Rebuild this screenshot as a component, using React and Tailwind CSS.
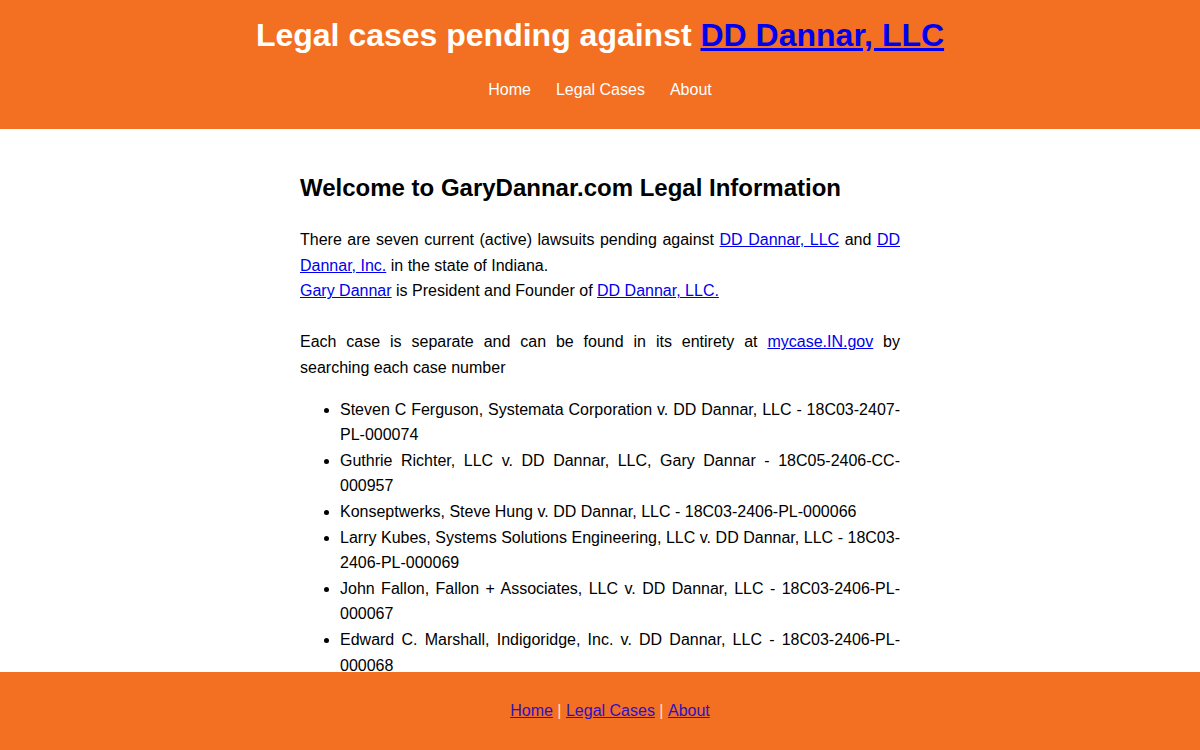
import React from 'react';

const cases = [
  'Steven C Ferguson, Systemata Corporation v. DD Dannar, LLC - 18C03-2407-PL-000074',
  'Guthrie Richter, LLC v. DD Dannar, LLC, Gary Dannar - 18C05-2406-CC-000957',
  'Konseptwerks, Steve Hung v. DD Dannar, LLC - 18C03-2406-PL-000066',
  'Larry Kubes, Systems Solutions Engineering, LLC v. DD Dannar, LLC - 18C03-2406-PL-000069',
  'John Fallon, Fallon + Associates, LLC v. DD Dannar, LLC - 18C03-2406-PL-000067',
  'Edward C. Marshall, Indigoridge, Inc. v. DD Dannar, LLC - 18C03-2406-PL-000068',
  'Jim Smith, Example Holdings, LLC v. DD Dannar, LLC - 18C03-2406-PL-000070',
];

function App() {
  return (
    <div className="min-h-screen bg-white text-black font-['Liberation_Sans',Arial,sans-serif]">
      <header className="bg-[#f36f21] text-white text-center pt-[17px] pb-[30px]">
        <h1 className="text-[32px] leading-[37px] font-bold">
          Legal cases pending against{' '}
          <a href="#" className="text-[#0000ee] underline">DD Dannar, LLC</a>
        </h1>
        <nav className="mt-[27px] flex justify-center gap-[25px] text-base leading-[18px]">
          <a href="#">Home</a>
          <a href="#">Legal Cases</a>
          <a href="#">About</a>
        </nav>
      </header>

      <main className="w-[600px] mx-auto pt-[45px] pb-[100px] text-base leading-[25.6px]">
        <h2 className="text-2xl leading-[28px] font-bold mb-[25px]">
          Welcome to GaryDannar.com Legal Information
        </h2>
        <p className="text-justify">
          There are seven current (active) lawsuits pending against{' '}
          <a href="#" className="text-[#0000ee] underline">DD Dannar, LLC</a> and{' '}
          <a href="#" className="text-[#0000ee] underline">DD Dannar, Inc.</a> in the state of Indiana.
        </p>
        <p>
          <a href="#" className="text-[#0000ee] underline">Gary Dannar</a> is President and Founder of{' '}
          <a href="#" className="text-[#0000ee] underline">DD Dannar, LLC.</a>
        </p>
        <p className="text-justify mt-[25.6px]">
          Each case is separate and can be found in its entirety at{' '}
          <a href="#" className="text-[#0000ee] underline">mycase.IN.gov</a> by searching each case number
        </p>
        <ul className="list-disc pl-10 mt-4 text-justify">
          {cases.map((c) => (
            <li key={c}>{c}</li>
          ))}
        </ul>
      </main>

      <footer className="fixed bottom-0 left-0 right-0 h-[78px] bg-[#f36f21] flex items-center justify-center pl-5 text-base whitespace-pre">
        <a href="#" className="text-[#2b12c4] underline">Home</a>
        <span className="text-[#ffe4cc]"> | </span>
        <a href="#" className="text-[#2b12c4] underline">Legal Cases</a>
        <span className="text-[#ffe4cc]"> | </span>
        <a href="#" className="text-[#2b12c4] underline">About</a>
      </footer>
    </div>
  );
}

export default App;
